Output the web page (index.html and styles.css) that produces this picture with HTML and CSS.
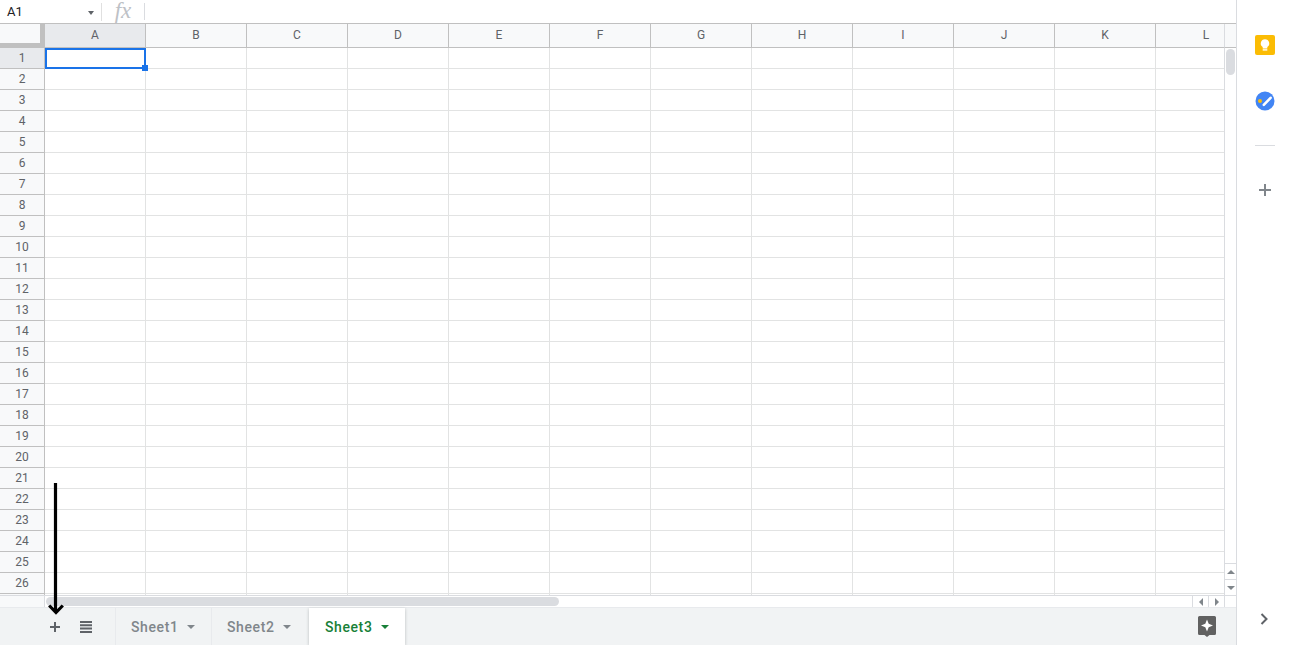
FILE: index.html

```html
<!DOCTYPE html>
<html>
  <head>
    <meta charset="UTF-8" />
    <title>Sheets</title>
    <link rel="stylesheet" href="styles.css">
  </head>
  <body>
    <div class="app">
      <div class="main">
        <div class="formula-bar">
          <div class="name-box">A1<span class="caret name-caret"></span></div>
          <div class="fx">fx</div>
          <div class="formula-input"></div>
        </div>
        <div class="sheet">
          <div class="corner"><span class="corner-bar"></span></div>
          <div class="col-heads">
            <div class="col-head active">A</div>
            <div class="col-head">B</div>
            <div class="col-head">C</div>
            <div class="col-head">D</div>
            <div class="col-head">E</div>
            <div class="col-head">F</div>
            <div class="col-head">G</div>
            <div class="col-head">H</div>
            <div class="col-head">I</div>
            <div class="col-head">J</div>
            <div class="col-head">K</div>
            <div class="col-head">L</div>
          </div>
          <div class="vscroll-head"></div>
          <div class="row-heads">
            <div class="row-head active">1</div>
            <div class="row-head">2</div>
            <div class="row-head">3</div>
            <div class="row-head">4</div>
            <div class="row-head">5</div>
            <div class="row-head">6</div>
            <div class="row-head">7</div>
            <div class="row-head">8</div>
            <div class="row-head">9</div>
            <div class="row-head">10</div>
            <div class="row-head">11</div>
            <div class="row-head">12</div>
            <div class="row-head">13</div>
            <div class="row-head">14</div>
            <div class="row-head">15</div>
            <div class="row-head">16</div>
            <div class="row-head">17</div>
            <div class="row-head">18</div>
            <div class="row-head">19</div>
            <div class="row-head">20</div>
            <div class="row-head">21</div>
            <div class="row-head">22</div>
            <div class="row-head">23</div>
            <div class="row-head">24</div>
            <div class="row-head">25</div>
            <div class="row-head">26</div>
          </div>
          <div class="cells">
            <div class="selection"><span class="handle"></span></div>
          </div>
          <div class="vscroll">
            <div class="vscroll-track"><div class="vscroll-thumb"></div></div>
            <div class="scroll-btn"><span class="tri tri-up"></span></div>
            <div class="scroll-btn"><span class="tri tri-down"></span></div>
          </div>
          <div class="hscroll-left"></div>
          <div class="hscroll">
            <div class="hscroll-track"><div class="hscroll-thumb"></div></div>
            <div class="scroll-btn-h"><span class="tri tri-left"></span></div>
            <div class="scroll-btn-h"><span class="tri tri-right"></span></div>
          </div>
          <div class="scroll-corner"></div>
        </div>
        <div class="tab-bar">
          <div class="tab-tool tab-add">
            <svg width="12" height="12" viewBox="0 0 12 12"><path d="M5 1h2v4h4v2H7v4H5V7H1V5h4z" fill="#5f6368"/></svg>
          </div>
          <div class="tab-tool tab-list">
            <svg width="14" height="12" viewBox="0 0 14 12"><path d="M1 0h12v2H1zM1 3.300h12v2H1zM1 6.600h12v2H1zM1 10h12v2H1z" fill="#5f6368"/></svg>
          </div>
          <div class="tab">Sheet1<span class="caret"></span></div>
          <div class="tab">Sheet2<span class="caret"></span></div>
          <div class="tab tab-current">Sheet3<span class="caret"></span></div>
          <div class="explore">
            <svg width="18" height="21" viewBox="0 0 18 21"><path d="M1.500 0h15A1.500 1.500 0 0 1 18 1.500v16a1.500 1.500 0 0 1-1.500 1.500H11.500L9 21 6.500 19h-5A1.500 1.500 0 0 1 0 17.500v-16A1.500 1.500 0 0 1 1.500 0z" fill="#616161"/><path d="M9 3.500l1.700 4.300L15 9.500l-4.300 1.700L9 15.500l-1.700-4.300L3 9.500l4.300-1.700z" fill="#fff"/></svg>
          </div>
        </div>
      </div>
      <div class="side">
        <div class="side-icon keep">
          <svg width="20" height="20" viewBox="0 0 20 20"><rect width="20" height="20" rx="2" fill="#fbbc04"/><path d="M10 4.200a4.300 4.300 0 0 0-2.300 7.900v1.300h4.600v-1.300A4.300 4.300 0 0 0 10 4.200z" fill="#fff"/><rect x="7.700" y="14.200" width="4.600" height="1.400" fill="#fff"/></svg>
        </div>
        <div class="side-icon tasks">
          <svg width="20" height="20" viewBox="0 0 20 20"><circle cx="10" cy="10" r="9.500" fill="#4285f4"/><path d="M8.800 13.800l6.800-7" stroke="#fff" stroke-width="2.600" stroke-linecap="round" fill="none"/><circle cx="5" cy="10" r="2" fill="#fbbc04"/></svg>
        </div>
        <div class="side-divider"></div>
        <div class="side-icon side-plus">
          <svg width="12" height="12" viewBox="0 0 12 12"><path d="M5 0h2v5h5v2H7v5H5V7H0V5h5z" fill="#80868b"/></svg>
        </div>
        <div class="side-expand">
          <svg width="8" height="12" viewBox="0 0 8 12"><path d="M1.500 1l5 5-5 5" stroke="#5f6368" stroke-width="2" fill="none"/></svg>
        </div>
      </div>
    </div>
    <svg class="arrow" width="16" height="132" viewBox="0 0 16 132"><path d="M7.500 0v128M1.200 122.500l6.800 7 6.800-7" stroke="#000" stroke-width="3.200" fill="none"/></svg>
  </body>
</html>
```

FILE: styles.css

```css
html,
body {
  margin: 0;
  padding: 0;
  width: 100%;
  height: 100%;
  overflow: hidden;
  background: #fff;
  font-family: Roboto, "Liberation Sans", sans-serif;
}
.app {
  display: flex;
  height: 645px;
}
.main {
  width: 1236px;
  flex-shrink: 0;
  display: flex;
  flex-direction: column;
  border-right: 1px solid #dadce0;
}
.caret {
  display: inline-block;
  width: 0;
  height: 0;
  border-left: 4px solid transparent;
  border-right: 4px solid transparent;
  border-top: 4px solid #80868b;
}

/* formula bar */
.formula-bar {
  height: 23px;
  border-bottom: 1px solid #c0c0c0;
  display: flex;
  align-items: center;
  flex-shrink: 0;
}
.name-box {
  width: 94px;
  padding-left: 7px;
  font-size: 13px;
  color: #202124;
  position: relative;
  height: 18px;
  line-height: 18px;
  border-right: 1px solid #e0e0e0;
}
.name-caret {
  position: absolute;
  left: 88px;
  top: 8px;
  border-left-width: 3px;
  border-right-width: 3px;
  border-top-color: #5f6368;
}
.fx {
  width: 42px;
  height: 17px;
  line-height: 15px;
  text-align: center;
  font-family: "Liberation Serif", serif;
  font-style: italic;
  font-size: 23px;
  color: #bdc1c6;
  border-right: 1px solid #dadce0;
}
.formula-input {
  flex: 1;
}

/* sheet grid */
.sheet {
  display: grid;
  grid-template-columns: 45px 1179px 12px;
  grid-template-rows: 24px 547px 12px;
  flex-shrink: 0;
}
.corner {
  background: #f8f9fa;
  border-right: 1px solid #c0c0c0;
  border-bottom: 1px solid #c0c0c0;
  position: relative;
}
.corner-bar {
  position: absolute;
  right: 0;
  bottom: 0;
  width: 44px;
  height: 23px;
  border-right: 4px solid #c0c0c0;
  border-bottom: 4px solid #c0c0c0;
  box-sizing: border-box;
}
.col-heads {
  display: flex;
  overflow: hidden;
  background: #f8f9fa;
  border-bottom: 1px solid #c0c0c0;
}
.col-head {
  width: 100px;
  flex-shrink: 0;
  border-right: 1px solid #c0c0c0;
  text-align: center;
  font-size: 12px;
  line-height: 23px;
  color: #5f6368;
}
.col-head.active {
  background: #e8eaed;
}
.vscroll-head {
  background: #f8f9fa;
  border-left: 1px solid #dadce0;
  border-bottom: 1px solid #c0c0c0;
}
.row-heads {
  background: #f8f9fa;
  border-right: 1px solid #c0c0c0;
}
.row-head {
  height: 20px;
  border-bottom: 1px solid #c0c0c0;
  text-align: center;
  font-size: 12px;
  line-height: 20px;
  color: #5f6368;
}
.row-head.active {
  background: #e8eaed;
}
.cells {
  position: relative;
  overflow: hidden;
  background-color: #fff;
  background-image: linear-gradient(to right, transparent 100px, #e2e3e3 100px),
    linear-gradient(to bottom, transparent 20px, #e2e3e3 20px);
  background-size: 101px 100%, 100% 21px;
  background-repeat: repeat-x, repeat-y;
}
.selection {
  position: absolute;
  left: 0;
  top: 0;
  width: 101px;
  height: 21px;
  border: 2px solid #1a73e8;
  box-sizing: border-box;
}
.handle {
  position: absolute;
  right: -4px;
  bottom: -4px;
  width: 6px;
  height: 6px;
  background: #1a73e8;
}
.vscroll {
  background: #fff;
  border-left: 1px solid #dadce0;
  display: flex;
  flex-direction: column;
}
.vscroll-track {
  flex: 1;
  padding: 1px 1px 0 1px;
}
.vscroll-thumb {
  width: 9px;
  height: 26px;
  background: #dadce0;
  border-radius: 5px;
}
.scroll-btn {
  height: 15px;
  border-top: 1px solid #dadce0;
  display: flex;
  align-items: center;
  justify-content: center;
}
.tri {
  display: block;
  width: 0;
  height: 0;
  border-style: solid;
  border-color: transparent;
}
.tri-up {
  border-width: 0 4px 4px 4px;
  border-bottom-color: #80868b;
}
.tri-down {
  border-width: 4px 4px 0 4px;
  border-top-color: #80868b;
}
.tri-left {
  border-width: 4px 4px 4px 0;
  border-right-color: #80868b;
}
.tri-right {
  border-width: 4px 0 4px 4px;
  border-left-color: #80868b;
}
.hscroll-left {
  background: #f8f9fa;
  border-top: 1px solid #dadce0;
  border-right: 1px solid #dadce0;
}
.hscroll {
  display: flex;
  background: #fff;
  border-top: 1px solid #dadce0;
}
.hscroll-track {
  flex: 1;
  padding: 1px 0 0 1px;
}
.hscroll-thumb {
  width: 513px;
  height: 9px;
  background: #dadce0;
  border-radius: 5px;
}
.scroll-btn-h {
  width: 15px;
  border-left: 1px solid #dadce0;
  display: flex;
  align-items: center;
  justify-content: center;
}
.scroll-corner {
  background: #fff;
  border-top: 1px solid #dadce0;
  border-left: 1px solid #dadce0;
}

/* sheet tabs */
.tab-bar {
  flex: 1;
  display: flex;
  background: #f1f3f4;
  border-top: 1px solid #e8eaed;
  padding-left: 40px;
}
.tab-tool {
  width: 30px;
  display: flex;
  align-items: center;
  justify-content: center;
}
.tab-tool.tab-add {
  margin-right: 1px;
}
.tab-tool.tab-list {
  margin-right: 14px;
}
.tab {
  display: flex;
  align-items: center;
  padding: 0 15.500px 0 15px;
  font-size: 14px;
  font-weight: 500;
  letter-spacing: 0.6px;
  color: #80868b;
  border-left: 1px solid #e8eaed;
}
.tab .caret {
  margin-left: 9px;
}
.tab-current {
  background: #fff;
  color: #188038;
  margin-left: 2px;
  padding: 0 16px 0 16px;
  border-left: 0;
  box-shadow: 0 1px 3px rgba(60, 64, 67, 0.3);
}
.tab-current .caret {
  border-top-color: #188038;
}
.explore {
  margin-left: auto;
  margin-right: 20px;
  display: flex;
  align-items: center;
}

/* side panel */
.side {
  flex: 1;
  position: relative;
  display: flex;
  flex-direction: column;
  align-items: center;
  padding-top: 35px;
  padding-left: 4px;
}
.side-icon {
  height: 20px;
  line-height: 0;
}
.tasks {
  margin-top: 36px;
}
.side-divider {
  width: 20px;
  height: 1px;
  background: #dadce0;
  margin-top: 34px;
}
.side-plus {
  margin-top: 38px;
}
.side-expand {
  position: absolute;
  bottom: 20px;
  left: 23px;
  line-height: 0;
}
.arrow {
  position: absolute;
  left: 48px;
  top: 483px;
}
```
